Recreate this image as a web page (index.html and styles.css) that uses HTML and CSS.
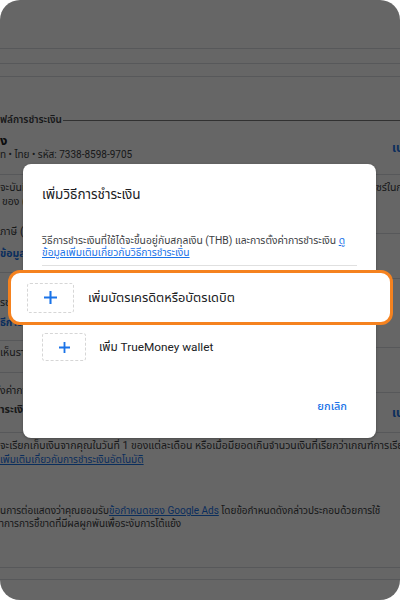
FILE: index.html
```html
<!DOCTYPE html>
<html lang="th">
<head>
<meta charset="utf-8">
<title>เพิ่มวิธีการชำระเงิน</title>
<link rel="stylesheet" href="styles.css">
</head>
<body>
<div class="screen">
  <div class="page">
    <div class="topbar"></div>
    <div class="subrow r15"></div>
    <div class="subrow r13"></div>
    <div class="legend"><span class="legend-text">ฟล์การชำระเงิน</span><span class="legend-rule"></span></div>
    <div class="profile">
      <div class="profile-info">
        <div class="name">ง</div>
        <div class="meta">ท • ไทย • รหัส: 7338-8598-9705</div>
      </div>
      <div class="side-link">เปลี่ยน</div>
    </div>
    <div class="settings">
      <div class="col main">
        <div class="block l1">
          <p class="ln">จะบันทึกข้อมูลการชำระเงิน</p>
          <p class="ln ind">ของ (บัญชี)</p>
          <p class="ln gap16">ภาษี (ไม่บังคับ)</p>
          <p class="ln link bold gap8">ข้อมูลภาษี</p>
        </div>
        <div class="block l2">
          <p class="ln">รชำระเงิน</p>
          <p class="ln link bold gap6">ธีการชำระเงิน</p>
        </div>
        <div class="block l3">
          <p class="ln">เห็นรายการ</p>
        </div>
        <div class="block l4">
          <p class="ln">ั้งค่าการชำระเงิน</p>
          <p class="ln bold gap5">ำระเงินอัตโนมัติ</p>
        </div>
      </div>
      <div class="col side">
        <div class="block r1"><p class="ln">ซร์ในการ</p></div>
        <div class="block r2"></div>
        <div class="block r3"></div>
        <div class="block r4"></div>
        <div class="block r5"><p class="ln link bold pl16">เปลี่ยน</p></div>
      </div>
    </div>
    <div class="note">
      <p class="ln">จะเรียกเก็บเงินจากคุณในวันที่ 1 ของแต่ละเดือน หรือเมื่อมียอดเกินจำนวนเงินที่เรียกว่าเกณฑ์การเรียกเก็บเงิน</p>
      <a class="ln link u" href="#">เพิ่มเติมเกี่ยวกับการชำระเงินอัตโนมัติ</a>
    </div>
    <p class="terms">นการต่อแสดงว่าคุณยอมรับ<a class="link u" href="#">ข้อกำหนดของ Google Ads</a> โดยข้อกำหนดดังกล่าวประกอบด้วยการใช้<br>าการการชี้ขาดที่มีผลผูกพันเพื่อระงับการโต้แย้ง</p>
    <div class="foot-rule first"></div>
    <div class="foot-rule second"></div>
  </div>

  <div class="scrim"></div>

  <div class="dialog" role="dialog">
    <h2 class="dlg-title">เพิ่มวิธีการชำระเงิน</h2>
    <p class="dlg-desc">วิธีการชำระเงินที่ใช้ได้จะขึ้นอยู่กับสกุลเงิน (THB) และการตั้งค่าการชำระเงิน <a class="blue u" href="#">ดู<br>ข้อมูลเพิ่มเติมเกี่ยวกับวิธีการชำระเงิน</a></p>
    <div class="dlg-rule"></div>
    <div class="opt">
      <span class="opt-box"><svg width="12" height="12" viewBox="0 0 12 12"><path d="M6 0v12M0 6h12" stroke="#1a73e8" stroke-width="2"/></svg></span>
      <span class="opt-text">เพิ่มบัตรเครดิตหรือบัตรเดบิต</span>
    </div>
    <div class="opt">
      <span class="opt-box"><svg width="11" height="11" viewBox="0 0 12 12"><path d="M6 0v12M0 6h12" stroke="#1a73e8" stroke-width="2"/></svg></span>
      <span class="opt-text">เพิ่ม TrueMoney wallet</span>
    </div>
    <div class="dlg-actions"><button class="btn-text">ยกเลิก</button></div>
  </div>

  <div class="spotlight">
    <span class="opt-box big"><svg width="13" height="13" viewBox="0 0 12 12"><path d="M6 0v12M0 6h12" stroke="#1a73e8" stroke-width="1.9"/></svg></span>
    <span class="opt-text big">เพิ่มบัตรเครดิตหรือบัตรเดบิต</span>
  </div>
</div>
</body>
</html>
```

FILE: styles.css
```css
* { box-sizing: border-box; }
html, body { margin: 0; padding: 0; background: #ffffff; }
body { font-family: Roboto, "Noto Sans Thai", "Noto Sans", sans-serif; }

.screen {
  position: relative;
  width: 400px;
  height: 600px;
  border-radius: 20px;
  overflow: hidden;
  background: #ffffff;
}

.page { width: 400px; color: #3c4043; font-size: 10.5px; }
.page p { margin: 0; }
.ln { display: block; line-height: 14px; white-space: nowrap; overflow: hidden; }
.link { color: #1a73e8; text-decoration: none; }
.u { text-decoration: underline; }
.bold { font-weight: 700; }

.topbar { height: 49px; border-bottom: 1px solid #dadce0; }
.subrow { border-bottom: 1px solid #dadce0; }
.r15 { height: 15px; }
.r13 { height: 13px; }

.legend { display: flex; align-items: center; margin-top: 36px; height: 14px; }
.legend-text { font-weight: 600; line-height: 14px; white-space: nowrap; font-size: 10px; }
.legend-rule { flex: 1; height: 1px; background: #7a7a7a; margin-left: 1px; }

.profile {
  display: grid;
  grid-template-columns: 376px 24px;
  margin-top: 7px;
  padding-bottom: 12px;
  border-bottom: 1px solid #dadce0;
}
.name { font-size: 13px; font-weight: 700; line-height: 14px; color: #202124; }
.meta { font-size: 10px; line-height: 14px; white-space: nowrap; }
.side-link { align-self: center; padding-left: 16px; color: #1a73e8; font-weight: 700; font-size: 12px; white-space: nowrap; overflow: hidden; }

.settings { display: grid; grid-template-columns: 376px 24px; }
.col { display: flex; flex-direction: column; min-width: 0; }
.block { border-bottom: 1px solid #dadce0; overflow: hidden; }
.l1 { height: 98px; padding-top: 6px; }
.l2 { height: 68px; padding-top: 23px; }
.l3 { height: 32px; padding-top: 5px; }
.l4 { height: 60px; padding-top: 11px; }
.r1 { height: 59px; padding-top: 6px; }
.r2 { height: 45px; }
.r3 { height: 69px; }
.r4 { height: 45px; }
.r5 { height: 40px; padding-top: 13px; }
.ind { padding-left: 2px; }
.gap16 { margin-top: 16px !important; }
.gap8 { margin-top: 8px !important; }
.gap6 { margin-top: 6px !important; }
.gap5 { margin-top: 5px !important; }
.pl16 { padding-left: 16px; font-size: 12px; }

.note { padding-top: 6px; }
.note .link { font-size: 10px; }
.terms { margin-top: 37px !important; line-height: 13px; white-space: nowrap; overflow: hidden; font-size: 10px; }
.foot-rule { height: 1px; background: #dadce0; }
.foot-rule.first { margin-top: 37px; }
.foot-rule.second { margin-top: 11px; }

.scrim { position: absolute; inset: 0; background: rgba(0, 0, 0, 0.6); }

.dialog {
  position: absolute;
  left: 23px;
  top: 164px;
  width: 353px;
  height: 274px;
  background: #ffffff;
  border-radius: 8px;
  box-shadow: 0 1px 3px rgba(0, 0, 0, 0.3);
  padding: 20px 19px 0;
  color: #202124;
}
.dlg-title { margin: 0; font-size: 13.5px; line-height: 20px; font-weight: 400; }
.dlg-desc { margin: 31px 0 0; font-size: 10.3px; line-height: 12px; color: #3c4043; }
.blue { color: #1a73e8; }
.dlg-rule { height: 1px; background: #e0e0e0; margin-top: 6px; }

.opt { display: flex; align-items: center; height: 46px; }
.dlg-rule + .opt { margin-top: 12px; }
.opt-box {
  width: 44px;
  height: 28px;
  border: 1px dashed #d6d6d6;
  border-radius: 3px;
  display: flex;
  align-items: center;
  justify-content: center;
  flex: none;
}
.opt-text { margin-left: 13px; font-size: 11.8px; color: #202124; white-space: nowrap; }

.dlg-actions { display: flex; justify-content: flex-end; margin-top: 29px; padding-right: 10px; }
.btn-text {
  border: 0;
  background: none;
  padding: 0;
  font: inherit;
  font-size: 11px;
  line-height: 16px;
  font-weight: 500;
  color: #1a73e8;
}

.spotlight {
  position: absolute;
  left: 8px;
  top: 270px;
  width: 385px;
  height: 55px;
  background: #ffffff;
  border: 3px solid #f5821f;
  border-radius: 12px;
  display: flex;
  align-items: center;
  padding-left: 16px;
}
.opt-box.big { width: 47px; height: 30px; }
.opt-text.big { margin-left: 14px; font-size: 12.8px; }
```
